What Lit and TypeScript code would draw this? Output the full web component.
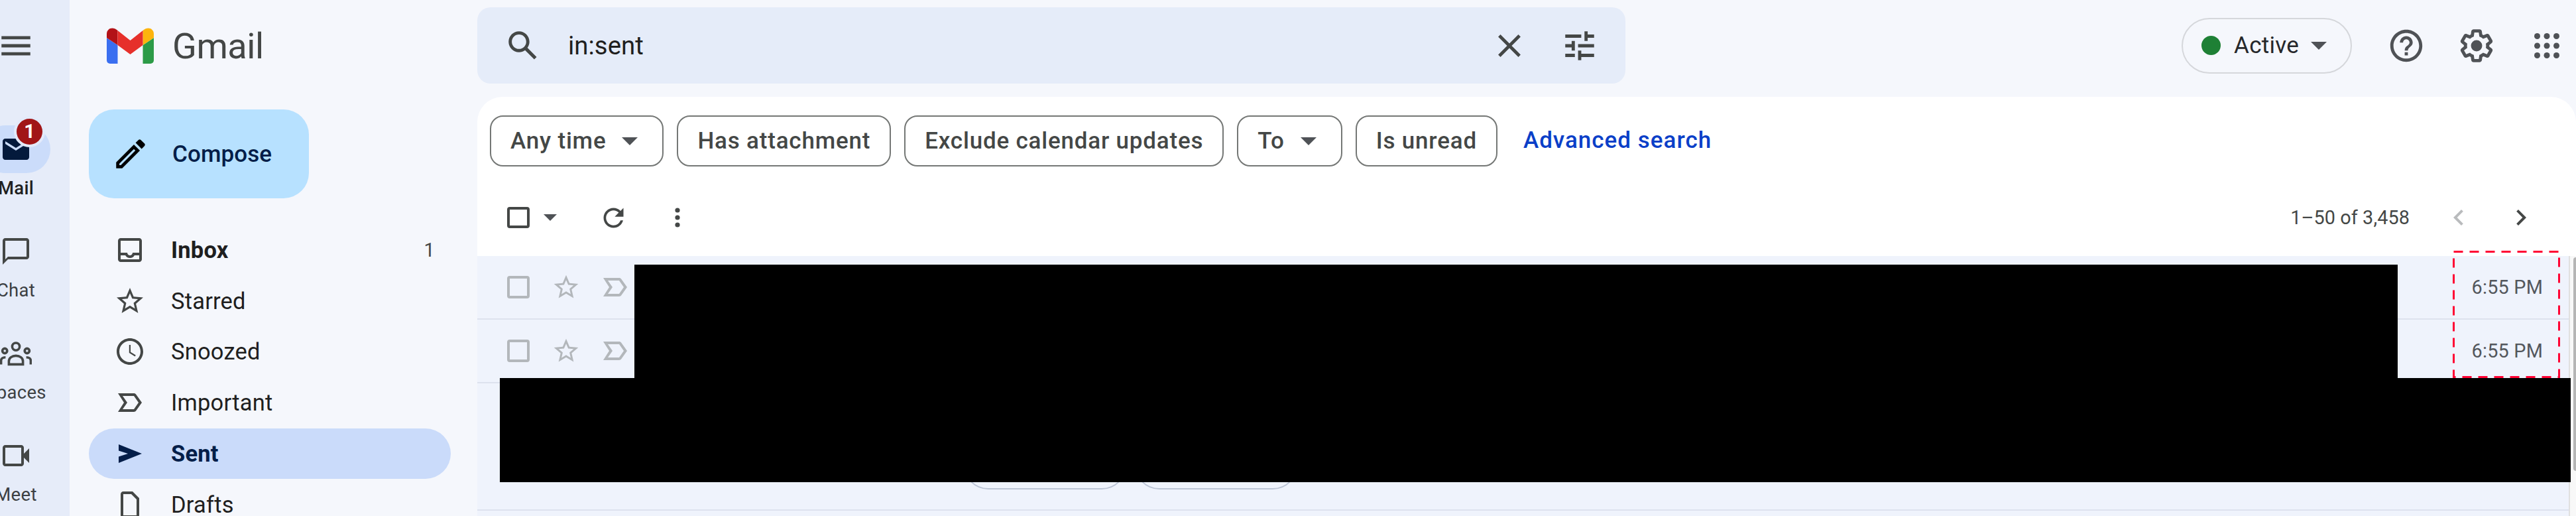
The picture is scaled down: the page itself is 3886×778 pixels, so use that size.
import { LitElement, html, css, svg } from "lit";
import { customElement } from "lit/decorators.js";

const P = {
  menu: "M3 18h18v-2H3v2zm0-5h18v-2H3v2zm0-7v2h18V6H3z",
  mail: "M20 4H4c-1.1 0-2 .9-2 2v12c0 1.1.9 2 2 2h16c1.1 0 2-.9 2-2V6c0-1.1-.9-2-2-2zm0 4l-8 5-8-5V6l8 5 8-5v2z",
  chat: "M20 2H4c-1.1 0-2 .9-2 2v18l4-4h14c1.1 0 2-.9 2-2V4c0-1.1-.9-2-2-2zm0 14H6l-2 2V4h16v12z",
  meet: "M18 10.48V6c0-1.1-.9-2-2-2H4c-1.1 0-2 .9-2 2v12c0 1.1.9 2 2 2h12c1.1 0 2-.9 2-2v-4.48l4 3.98v-11l-4 3.98zm-2-.79V18H4V6h12v3.69z",
  pencil: "M3 17.25V21h3.75L17.81 9.94l-3.75-3.75L3 17.25zM5.92 19H5v-.92l9.06-9.06.92.92L5.92 19zM20.71 5.63l-2.34-2.34c-.2-.2-.45-.29-.71-.29s-.51.1-.7.29l-1.83 1.83 3.75 3.75 1.83-1.83c.39-.39.39-1.02 0-1.41z",
  inbox: "M19 3H5c-1.1 0-2 .9-2 2v14c0 1.1.9 2 2 2h14c1.1 0 2-.9 2-2V5c0-1.1-.9-2-2-2zm0 16H5v-3h3.56c.69 1.19 1.97 2 3.45 2s2.75-.81 3.44-2H19v3zm0-5h-4.99c0 1.1-.9 2-2 2s-2-.9-2-2H5V5h14v9z",
  star: "M22 9.24l-7.19-.62L12 2 9.19 8.63 2 9.24l5.46 4.73L5.82 21 12 17.27 18.18 21l-1.63-7.03L22 9.24zM12 15.4l-3.76 2.27 1-4.28-3.32-2.88 4.38-.38L12 6.1l1.71 4.04 4.38.38-3.32 2.88 1 4.28L12 15.4z",
  clock: "M11.99 2C6.47 2 2 6.48 2 12s4.47 10 9.99 10C17.52 22 22 17.52 22 12S17.52 2 11.99 2zM12 20c-4.42 0-8-3.58-8-8s3.58-8 8-8 8 3.58 8 8-3.58 8-8 8zm.5-13H11.4v6l4.4 2.7.6-1-3.9-2.3z",
  important: "M15 19H3l4.5-7L3 5h12c.65 0 1.26.31 1.63.84L21 12l-4.37 6.16c-.37.52-.98.84-1.63.84zm-8.5-2H15l3.5-5L15 7H6.5l3.5 5-3.5 5z",
  sent: "M3.5 5L21 12 3.5 19v-4.8L10.5 12 3.5 9.8z",
  draft: "M14 2H7c-1.1 0-2 .9-2 2v16c0 1.1.9 2 2 2h10c1.1 0 2-.9 2-2V7l-5-5zm3 18H7V4h6l4 4v12z",
  search: "M20.49 19l-5.73-5.73C15.53 12.2 16 10.91 16 9.5 16 5.91 13.09 3 9.5 3S3 5.91 3 9.5 5.91 16 9.5 16c1.41 0 2.7-.47 3.77-1.24L19 20.49 20.49 19zM5 9.5C5 7.01 7.01 5 9.5 5S14 7.01 14 9.5 11.99 14 9.5 14 5 11.99 5 9.5z",
  close: "M19 6.41L17.59 5 12 10.59 6.41 5 5 6.41 10.59 12 5 17.59 6.41 19 12 13.41 17.59 19 19 17.59 13.41 12z",
  tune: "M3 17v2h6v-2H3zM3 5v2h10V5H3zm10 16v-2h8v-2h-8v-2h-2v6h2zM7 9v2H3v2h4v2h2V9H7zm14 4v-2H11v2h10zm-6-4h2V7h4V5h-4V3h-2v6z",
  help: "M11 18h2v-2h-2v2zm1-16C6.48 2 2 6.48 2 12s4.48 10 10 10 10-4.48 10-10S17.52 2 12 2zm0 18c-4.41 0-8-3.59-8-8s3.59-8 8-8 8 3.59 8 8-3.59 8-8 8zm0-14c-2.21 0-4 1.79-4 4h2c0-1.1.9-2 2-2s2 .9 2 2c0 2-3 1.75-3 5h2c0-2.25 3-2.5 3-5 0-2.21-1.79-4-4-4z",
  gear: "M13.85 22.25h-3.7c-.74 0-1.36-.54-1.45-1.27l-.27-1.89c-.27-.14-.53-.29-.79-.46l-1.8.72c-.7.26-1.47-.03-1.81-.65L2.2 15.53c-.35-.66-.2-1.44.36-1.88l1.53-1.19c-.01-.15-.02-.3-.02-.46 0-.15.01-.31.02-.46l-1.52-1.19c-.59-.45-.74-1.26-.37-1.88l1.85-3.19c.34-.62 1.11-.9 1.79-.63l1.81.73c.26-.17.52-.32.78-.46l.27-1.91c.09-.7.71-1.25 1.44-1.25h3.7c.74 0 1.36.54 1.45 1.27l.27 1.89c.27.14.53.29.79.46l1.8-.72c.71-.26 1.48.03 1.82.65l1.84 3.18c.36.66.2 1.44-.36 1.88l-1.52 1.19c.01.15.02.3.02.46s-.01.31-.02.46l1.52 1.19c.56.45.72 1.23.37 1.86l-1.86 3.22c-.34.62-1.11.9-1.8.63l-1.8-.72c-.26.17-.52.32-.78.46l-.27 1.91c-.1.68-.72 1.22-1.46 1.22zm-3.23-2h2.76l.37-2.55.53-.22c.44-.18.88-.44 1.34-.78l.45-.34 2.38.96 1.38-2.4-2.03-1.58.07-.56c.03-.26.06-.51.06-.78s-.03-.53-.06-.78l-.07-.56 2.03-1.58-1.39-2.4-2.39.96-.45-.35c-.42-.32-.87-.58-1.33-.77l-.52-.22-.37-2.55h-2.76l-.37 2.55-.53.21c-.44.19-.88.44-1.34.79l-.45.33-2.38-.95-1.39 2.39 2.03 1.58-.07.56a7 7 0 0 0-.06.79c0 .26.02.53.06.78l.07.56-2.03 1.58 1.38 2.4 2.39-.96.45.35c.43.33.86.58 1.33.77l.53.22.38 2.55z M12 8.5a3.5 3.5 0 1 0 0 7 3.5 3.5 0 0 0 0-7z",
  refresh: "M17.65 6.35C16.2 4.9 14.21 4 12 4c-4.42 0-7.99 3.58-7.99 8s3.57 8 7.99 8c3.73 0 6.84-2.55 7.73-6h-2.08c-.82 2.33-3.04 4-5.65 4-3.31 0-6-2.69-6-6s2.69-6 6-6c1.66 0 3.14.69 4.22 1.78L13 11h7V4l-2.35 2.35z",
  prev: "M15.41 7.41L14 6l-6 6 6 6 1.41-1.41L10.83 12z",
  next: "M10 6L8.59 7.41 13.17 12l-4.58 4.59L10 18l6-6z",
};

const icon = (d: string, size: number, cls = "") =>
  html`<svg class="ic s${size} ${cls}" viewBox="0 0 24 24"><path d=${d}></path></svg>`;

const dots = (cx: number[], cy: number[], r: number) =>
  cx.flatMap((x) => cy.map((y) => svg`<circle cx=${x} cy=${y} r=${r}></circle>`));

const caret = (cls: string) =>
  html`<svg class="caret ${cls}" viewBox="0 0 24 12"><path d="M0 0h24L12 12z"></path></svg>`;

const rail = [
  { label: "Chat", icon: html`${icon(P.chat, 48)}` },
  {
    label: "Spaces",
    icon: html`<svg class="ic s48 stroked" viewBox="0 0 24 24">
      <circle cx="12" cy="6.800" r="2.800"></circle>
      <circle cx="3.600" cy="10" r="1.800"></circle>
      <circle cx="20.400" cy="10" r="1.800"></circle>
      <path d="M6.700 20.200v-2.300c0-2.600 2.400-4.200 5.300-4.200s5.300 1.600 5.300 4.200v2.300z"></path>
      <path d="M.8 20.200v-2.800c0-1.400 1.200-2.500 3.400-2.500M23.200 20.200v-2.800c0-1.400-1.200-2.500-3.400-2.500"></path>
    </svg>`,
  },
  { label: "Meet", icon: html`${icon(P.meet, 48)}` },
];

const nav = [
  { label: "Inbox", d: P.inbox, count: "1", cls: "strong" },
  { label: "Starred", d: P.star },
  { label: "Snoozed", d: P.clock },
  { label: "Important", d: P.important },
  { label: "Sent", d: P.sent, cls: "current" },
  { label: "Drafts", d: P.draft },
];

@customElement("app-root")
export class AppRoot extends LitElement {
  static styles = css`
    :host {
      display: block;
      position: relative;
      width: 3886px;
      height: 778px;
      overflow: hidden;
      background: #f5f7fc;
      font-family: Roboto, "Liberation Sans", sans-serif;
      color: #1f1f1f;
    }
    .app { display: flex; height: 778px; }
    .ic { display: block; flex: none; fill: #444746; }
    .s44 { width: 44px; height: 44px; }
    .s45 { width: 45px; height: 45px; }
    .s48 { width: 48px; height: 48px; }
    .s58 { width: 58px; height: 58px; }
    .stroked { fill: none; stroke: #444746; stroke-width: 1.8; }
    .caret { display: block; flex: none; fill: #4f5256; }

    /* far-left rail, clipped by the window edge */
    .rail { width: 105px; flex: none; background: #e6ecf9; overflow: hidden; }
    .rail-in { width: 104px; margin-left: -28px; padding-top: 40px; display: flex; flex-direction: column; align-items: center; }
    .burger { margin-bottom: 91px; }
    .item { height: 154px; flex: none; display: flex; flex-direction: column; align-items: center; }
    .pill { position: relative; width: 104px; height: 72px; flex: none; border-radius: 36px; display: flex; align-items: center; justify-content: center; }
    .item.on .pill { background: #cbdcfa; }
    .item.on .ic { fill: #041a3c; }
    .item label { height: 46px; line-height: 46px; font-size: 27.5px; letter-spacing: .3px; color: #3c4043; white-space: nowrap; }
    .item.on label { color: #1f1f1f; font-weight: 500; }
    .badge { position: absolute; left: 53px; top: -10px; width: 39px; height: 39px; border-radius: 50%; background: #a11517; box-shadow: 0 0 0 4px #e3eafa; color: #fff; font-size: 29px; font-weight: 700; line-height: 39px; text-align: center; }

    /* sidebar */
    .side { width: 615px; flex: none; padding-top: 42px; box-sizing: border-box; }
    .brand { height: 54px; margin-left: 56px; display: flex; align-items: center; gap: 28px; }
    .brand svg { width: 71px; height: 54px; flex: none; }
    .brand span { font-size: 54px; color: #444746; letter-spacing: -.4px; }
    .compose { margin: 69px 0 0 29px; width: 332px; height: 134px; border-radius: 38px; background: #b7e1ff; display: flex; align-items: center; padding-left: 34px; box-sizing: border-box; gap: 34px; font-size: 35px; font-weight: 500; letter-spacing: .1px; color: #041e49; }
    .compose .ic { fill: #000; }
    .nav { margin: 39.4px 0 0 29px; width: 546px; display: flex; flex-direction: column; }
    .row-nav { height: 76.8px; flex: none; border-radius: 38.4px; display: flex; align-items: center; padding: 0 24px 0 38px; box-sizing: border-box; gap: 38px; font-size: 34.5px; letter-spacing: .2px; color: #1f1f1f; }
    .row-nav span:nth-of-type(2) { margin-left: auto; font-size: 28.8px; color: #444746; }
    .row-nav.strong { font-weight: 700; }
    .row-nav.strong span:nth-of-type(2) { font-weight: 400; }
    .row-nav.current { background: #cadbfa; font-weight: 700; color: #041e49; }
    .row-nav.current .ic { fill: #041e49; }

    /* main column */
    .main { flex: 1; min-width: 0; display: flex; flex-direction: column; }
    .top { height: 146px; flex: none; padding: 11px 15px 20px 0; box-sizing: border-box; display: flex; align-items: center; }
    .search { width: 1732px; height: 115px; flex: none; box-sizing: border-box; background: #e5ecf9; border-radius: 20px; display: flex; align-items: center; padding: 0 40px 0 40px; font-size: 38.4px; color: #1f1f1f; }
    .search .q { margin-left: 39px; flex: 1; letter-spacing: 0; }
    .search .x { margin-right: 48px; }
    .status { margin-left: auto; width: 257px; height: 84px; box-sizing: border-box; border: 2px solid #d5d7db; border-radius: 42px; display: flex; align-items: center; padding-left: 28px; font-size: 35px; color: #26282b; letter-spacing: .3px; }
    .status i { width: 29px; height: 29px; border-radius: 50%; background: #1e8035; flex: none; margin-right: 20px; }
    .status .caret { width: 24px; height: 12px; margin-left: 18px; }
    .tools { display: flex; align-items: center; gap: 48px; margin-left: 53px; }
    .tools .ic { fill: #4f5256; }

    .panel { flex: 1; min-height: 0; background: #fff; border-radius: 38px 38px 0 0; overflow: hidden; display: flex; flex-direction: column; }
    .chips { height: 105px; flex: none; box-sizing: border-box; padding: 28px 0 0 19px; display: flex; align-items: flex-start; gap: 20px; }
    .chip { height: 77px; box-sizing: border-box; border: 2px solid #747775; border-radius: 20px; padding: 0 29px; display: flex; align-items: center; font-size: 35px; font-weight: 500; letter-spacing: .8px; color: #444746; white-space: nowrap; }
    .chip .caret { width: 24px; height: 12px; margin-left: 24px; }
    .chip.menu { padding-right: 37px; }
    .adv { height: 77px; line-height: 75px; margin-left: 19px; font-size: 35px; font-weight: 500; letter-spacing: 1px; color: #0b3fc8; white-space: nowrap; }

    .bar { height: 135px; flex: none; box-sizing: border-box; padding: 19px 59px 0 45px; display: flex; align-items: center; }
    .box { width: 34px; height: 34px; box-sizing: border-box; border: 4px solid #b3b7bb; border-radius: 4px; flex: none; }
    .bar .box { border-color: #444746; height: 32px; }
    .bar .caret { width: 20px; height: 10px; margin: 0 0 0 21px; }
    .bar .refresh { margin-left: 63px; }
    .bar .more { margin-left: 50px; }
    .pages { margin-left: auto; font-size: 28.8px; color: #444746; letter-spacing: .1px; }
    .bar .prev { margin-left: 50px; fill: #b9bbbd; }
    .bar .next { margin-left: 46px; fill: #444746; }

    .list { flex: 1; min-height: 0; display: flex; }
    .rows { flex: 1; min-width: 0; background: #eff3fc; }
    .mrow { height: 96px; box-sizing: border-box; border-bottom: 2px solid #dde2ee; display: flex; align-items: center; padding: 0 39px 0 45px; }
    .mrow .ic { fill: #b3b7bb; }
    .mrow .star { margin-left: 33px; }
    .mrow .imp { margin-left: 28px; }
    .mrow time { margin-left: auto; font-size: 28.8px; letter-spacing: .2px; color: #53575c; }
    .mrow.tall { height: 192px; align-items: flex-start; padding: 83px 0 0 733px; gap: 11px; }
    .att { width: 247px; height: 77px; box-sizing: border-box; border: 2px solid #bcc5d6; border-radius: 38px; flex: none; }
    .scroll { width: 11px; flex: none; box-sizing: border-box; border-left: 2px solid #e0e0e0; background: #f8f8f8; display: flex; justify-content: flex-end; padding-top: 2px; }
    .thumb { width: 4px; height: 322px; background: #b5b5b5; border-radius: 4px 0 0 4px; }

    /* redaction blocks and annotation lying over the page */
    .redact { position: absolute; background: #000; }
    .r1 { left: 957px; top: 399px; width: 2660px; height: 171px; }
    .r2 { left: 754px; top: 570px; width: 3124px; height: 157px; }
    .dash { position: absolute; left: 3700px; top: 378px; width: 162px; height: 192px; fill: none; stroke: #ff0033; stroke-width: 3; }
  `;

  private msg() {
    return html`<div class="mrow">
      <div class="box"></div>
      ${icon(P.star, 44, "star")}${icon(P.important, 48, "imp")}
      <time>6:55 PM</time>
    </div>`;
  }

  render() {
    return html`
      <div class="app">
        <aside class="rail">
          <div class="rail-in">
            ${icon(P.menu, 58, "burger")}
            <div class="item on">
              <div class="pill">${icon(P.mail, 48)}<span class="badge">1</span></div>
              <label>Mail</label>
            </div>
            ${rail.map((r) => html`<div class="item"><div class="pill">${r.icon}</div><label>${r.label}</label></div>`)}
          </div>
        </aside>
        <nav class="side">
          <div class="brand">
            <svg viewBox="0 0 71 54">
              <path fill="#3a6ff0" d="M0 15v34a5 5 0 0 0 5 5h11.500V26z"></path>
              <path fill="#2c9b47" d="M71 15v34a5 5 0 0 1-5 5H54.500V26z"></path>
              <path fill="#b31217" d="M0 15V9c0-8 9-12 16.500-5V26z"></path>
              <path fill="#fdb40d" d="M71 15V9c0-8-9-12-16.500-5V26z"></path>
              <path fill="#e6302b" d="M16.500 4L35.500 19 54.500 4V26L35.500 40 16.500 26z"></path>
            </svg>
            <span>Gmail</span>
          </div>
          <div class="compose">${icon(P.pencil, 58)}<span>Compose</span></div>
          <div class="nav">
            ${nav.map(
              (n) => html`<div class="row-nav ${n.cls ?? ""}">
                ${icon(n.d, 48)}<span>${n.label}</span>${n.count ? html`<span>${n.count}</span>` : ""}
              </div>`
            )}
          </div>
        </nav>
        <main class="main">
          <header class="top">
            <div class="search">
              ${icon(P.search, 58)}
              <span class="q">in:sent</span>
              ${icon(P.close, 58, "x")}${icon(P.tune, 58)}
            </div>
            <div class="status"><i></i><span>Active</span>${caret("")}</div>
            <div class="tools">
              ${icon(P.help, 58)}${icon(P.gear, 58)}
              <svg class="ic s58" viewBox="0 0 58 58">${dots([14.5, 29, 43.5], [14.5, 29, 43.5], 4.5)}</svg>
            </div>
          </header>
          <section class="panel">
            <div class="chips">
              <div class="chip menu">Any time${caret("")}</div>
              <div class="chip">Has attachment</div>
              <div class="chip">Exclude calendar updates</div>
              <div class="chip menu">To${caret("")}</div>
              <div class="chip">Is unread</div>
              <div class="adv">Advanced search</div>
            </div>
            <div class="bar">
              <div class="box"></div>
              ${caret("")}
              ${icon(P.refresh, 45, "refresh")}
              <svg class="ic s48 more" viewBox="0 0 48 48">${dots([24], [13, 24, 35], 3.6)}</svg>
              <span class="pages">1–50 of 3,458</span>
              ${icon(P.prev, 48, "prev")}${icon(P.next, 48, "next")}
            </div>
            <div class="list">
              <div class="rows">
                ${this.msg()}${this.msg()}
                <div class="mrow tall"><div class="att"></div><div class="att"></div></div>
                <div class="mrow"></div>
              </div>
              <div class="scroll"><div class="thumb"></div></div>
            </div>
          </section>
        </main>
      </div>
      <div class="redact r1"></div>
      <div class="redact r2"></div>
      <svg class="dash" viewBox="0 0 162 192"><rect x="1.500" y="1.500" width="159" height="189" stroke-dasharray="14 10"></rect></svg>
    `;
  }
}
